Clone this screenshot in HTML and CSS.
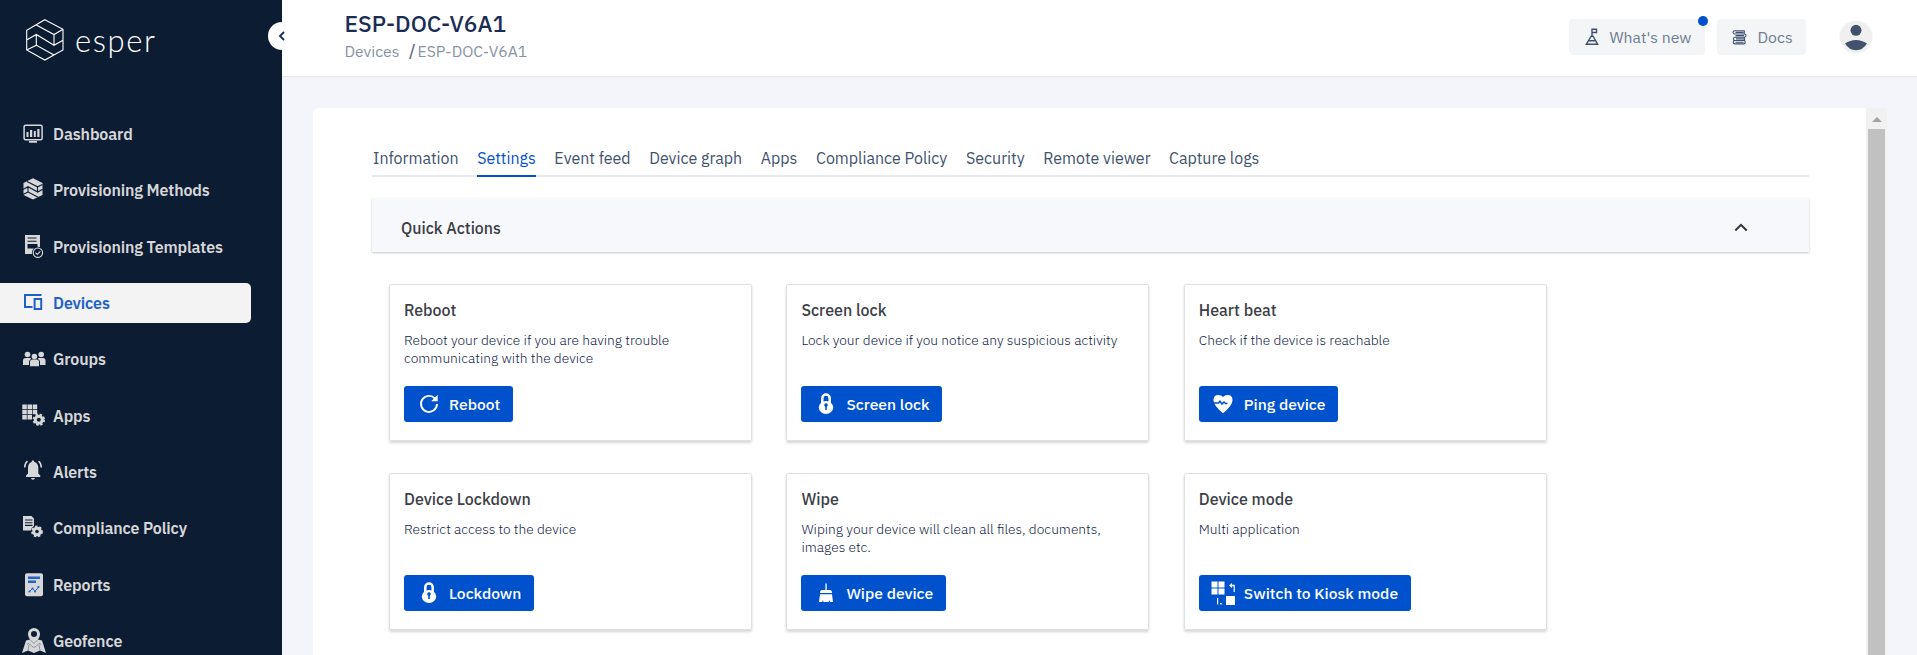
FILE: index.html
```html
<!DOCTYPE html>
<html lang="en">
<head>
<meta charset="utf-8">
<title>Esper</title>
<link rel="stylesheet" href="styles.css">
</head>
<body>
<div class="app">
  <aside class="sidebar">
    <div class="brand">
      <svg class="brand-mark" width="38" height="42" viewBox="0 0 38 42"><path d="M18.8 .7 37 10.3V31L18.8 41 .7 31V11.3ZM10.3 6 28 15.5l9-5.2M28 15.5v10.700l9-5M.7 21l9.600-5.500L28 26.200M10.300 15.500v10.700L28 36M10.300 26.200.7 31"/></svg>
      <span class="brand-name">esper</span>
    </div>
    <button class="collapse" aria-label="Collapse"><svg width="10" height="12" viewBox="0 0 10 12"><path d="M7 2 3 6l4 4"/></svg></button>
    <nav class="nav">
      <a class="nav-item"><svg viewBox="0 0 26 26"><rect x="2.100" y="4.300" width="18" height="14.500" rx="1.500" class="line"/><path d="M4.500 11h2v5h-2zM8 9h2.200v7H8zM11.800 10h2v6h-2zM15.300 8h2.200v8h-2.200zM7 20h8v1.800H7z"/></svg><span>Dashboard</span></a>
      <a class="nav-item"><svg viewBox="0 0 26 26"><path d="M11 1.200 20.500 6v12L11 22.500 1.500 18V6Z"/><path class="cut" d="M5 4.500 15.500 9.800 20.500 7.500M15.500 9.800v5M1 12.500l5-2.800L15.700 15l5-2.800M6 10v5l10.500 5.500M6 15l-5 2.500"/></svg><span>Provisioning Methods</span></a>
      <a class="nav-item"><svg viewBox="0 0 26 26"><path d="M3 1h15v12h-4l-4 7H3Z"/><path class="cut" d="M5.500 4h9M5.500 7.200h9"/><path class="hole" d="M5.500 10h10v3l-3 1.500h-7z"/><circle cx="15.900" cy="18.700" r="6" class="hole"/><circle cx="15.900" cy="18.700" r="4.700" class="line thin"/><path class="line thin" d="m13.500 18.700 1.800 1.700 3-3"/></svg><span>Provisioning Templates</span></a>
      <a class="nav-item active"><svg viewBox="0 0 26 26"><path class="line dev" d="M19.500 5H3v12M2 17.100h8.500M12.600 9h6.600v10h-6.600z"/></svg><span>Devices</span></a>
      <a class="nav-item"><svg viewBox="0 0 26 26"><circle cx="5.500" cy="8.500" r="2.800"/><circle cx="19.200" cy="8.500" r="2.800"/><path d="M1 19v-4.500q0-2.500 2.500-2.500h17.500q2.500 0 2.500 2.500V19Z"/><path class="hole" d="M7 21v-5q0-2 2-3a4 4 0 1 1 7 0q2 1 2 3v5z"/><circle cx="12.400" cy="10.500" r="2.800"/><path d="M8 20.200V16q0-2.500 2.500-2.500h4Q17 13.500 17 16v4.200Z"/></svg><span>Groups</span></a>
      <a class="nav-item"><svg viewBox="0 0 26 26"><path d="M.3 1.500h4.500v4.500H.3zM5.500 1.500h4.500v4.500H5.500zM10.700 1.500h4.500v4.500h-4.500zM.3 6.700h4.500v4.500H.3zM5.500 6.700h4.500v4.500H5.500zM10.700 6.700h4.500v4.500h-4.500zM.3 11.900h4.500v4.500H.3zM5.500 11.900h4.500v4.500H5.500z"/><circle cx="16.800" cy="16.700" r="6" class="hole"/><circle cx="16.800" cy="16.700" r="3.500" class="line gear"/><circle cx="16.800" cy="16.700" r="5.300" class="teeth"/></svg><span>Apps</span></a>
      <a class="nav-item"><svg viewBox="0 0 26 26"><path d="M11 1.500c1 0 1.300.7 1.300 1.500 3 .8 4 3 4 6v5.500l2 2V18H4v-1.500l2-2V9c0-3 1-5.200 3.700-6 0-.8.300-1.500 1.300-1.500ZM9 19h4q-.3 1.800-2 1.800T9 19Z"/><path class="line" d="M5.500 2.200Q2.700 4.300 2.700 8.500M16.500 2.200q2.800 2.100 2.800 6.300"/></svg><span>Alerts</span></a>
      <a class="nav-item"><svg viewBox="0 0 26 26"><path d="M1 .9h8.500l2.500 2.500v12H1Z"/><path class="cut" d="M3 5h7.500M3 7.700h7.500M3 10.400h7.500"/><circle cx="15" cy="16.500" r="6.300" class="hole"/><circle cx="15" cy="16.500" r="3.300" class="line gear"/><circle cx="15" cy="16.500" r="5" class="teeth"/></svg><span>Compliance Policy</span></a>
      <a class="nav-item"><svg viewBox="0 0 26 26"><rect x="3" y="1.300" width="18" height="23" rx="2"/><path class="blue bar" d="M6 5.800h12M6 9.800h8"/><path class="blue" d="m7.500 19.500 3-3 2.500 3 3.500-4.500"/><path class="blue dots" d="M7.500 19.500h.01M10.500 16.500h.01M13 19.500h.01M16.500 15h.01"/></svg><span>Reports</span></a>
      <a class="nav-item"><svg viewBox="0 0 26 26"><path d="M12 0a6 6 0 0 1 6 6c0 2-1 4-2 5.500l4 1L24 25l-6-2.500L12 25l-6-2.500L0 25l4-12.500 4-1C7 10 6 8 6 6a6 6 0 0 1 6-6Z"/><circle cx="12" cy="6" r="3" class="hole"/><path class="cut faint" d="M8 11.500q2 2 4 4 2-2 4-4M5 16.500l2-1 2.500 2.500 2.500 1.500 2.500-1.500 2.500-2.500 2 1M6 22l1-5M18 22l-1-5"/></svg><span>Geofence</span></a>
    </nav>
  </aside>

  <div class="page">
    <header class="topbar">
      <div class="heading">
        <h1 class="title">ESP-DOC-V6A1</h1>
        <div class="crumbs"><a class="crumb-root">Devices</a><span class="slash">/</span><span class="crumb-leaf">ESP-DOC-V6A1</span></div>
      </div>
      <div class="tools">
        <button class="tool whats-new"><svg width="14" height="18" viewBox="0 0 14 18"><path d="M1.300 16.300h11.400L8 8.200H6.200ZM4 12.700h6M7 8.200V1.200h4.500v3.300H7"/></svg><span>What's new</span><i class="dot"></i></button>
        <button class="tool docs"><svg width="15" height="15" viewBox="0 0 15 15"><path d="M12.800.8H3Q1 .8 1 2.400T3 4h9.800M12.300.8V4M3.500 2.400h8M3 4h9.500Q14 4 14 5.600T12.500 7.300H3.500M3.500 5.600H12M12.500 7.300H3Q1.500 7.300 1.500 8.900T3 10.500h9.500V7.300M4 8.900h8M3 10.500q-1.800 0-1.800 1.700T3 13.900h8.700q1.500 0 1.500-1.700t-1.500-1.700M3.500 12.200h8"/></svg><span>Docs</span></button>
        <svg class="avatar" width="34" height="34" viewBox="0 0 34 34"><circle cx="17" cy="17" r="16.500" fill="#f0f0f1"/><circle cx="17" cy="10.300" r="5.500"/><path d="M6 23.500Q11 20 17 20t11 3.500Q24 30.200 17 30.200T6 23.500Z"/></svg>
      </div>
    </header>

    <main class="panel">
      <div class="content">
        <div class="tabs">
          <a class="tab">Information</a><a class="tab selected">Settings</a><a class="tab">Event feed</a><a class="tab">Device graph</a><a class="tab">Apps</a><a class="tab">Compliance Policy</a><a class="tab">Security</a><a class="tab">Remote viewer</a><a class="tab">Capture logs</a>
        </div>
        <section class="accordion"><h2>Quick Actions</h2><svg width="14" height="9" viewBox="0 0 14 9"><path d="m1.300 7.500 5.700-5.700 5.700 5.700"/></svg></section>
        <div class="cards">
          <article class="card"><h3>Reboot</h3><p>Reboot your device if you are having trouble<br>communicating with the device</p>
            <button class="btn"><svg viewBox="0 0 24 24"><path class="stroke" d="M18 6.600A8 8 0 1 0 20 12"/><path d="M20.700 2.800v6.500h-6.500z"/></svg><span>Reboot</span></button></article>
          <article class="card"><h3>Screen lock</h3><p>Lock your device if you notice any suspicious activity</p>
            <button class="btn"><svg viewBox="0 0 24 24"><path class="stroke shackle" d="M8.300 11V6.200a3.700 3.700 0 0 1 7.400 0V11"/><ellipse cx="12" cy="15.500" rx="7.200" ry="6.500"/><path class="key" d="M10.200 13a1.800 1.800 0 1 1 2.600 1.700V18h-1.600v-3.300Q10.200 14 10.200 13Z"/></svg><span>Screen lock</span></button></article>
          <article class="card"><h3>Heart beat</h3><p>Check if the device is reachable</p>
            <button class="btn"><svg viewBox="0 0 24 24"><path d="M12 21.300Q2.500 13.500 2.500 8.300 2.500 3 7.300 3 10.500 3 12 5 13.500 3 16.700 3q4.800 0 4.800 5.300 0 5.200-9.500 13Z"/><path class="pulse" d="M3 11h4.500L9 9.300l2 2.700L13 10l1.500 1.500h2"/></svg><span>Ping device</span></button></article>
          <article class="card"><h3>Device Lockdown</h3><p>Restrict access to the device</p>
            <button class="btn"><svg viewBox="0 0 24 24"><path class="stroke shackle" d="M8.300 11V6.200a3.700 3.700 0 0 1 7.400 0V11"/><ellipse cx="12" cy="15.500" rx="7.200" ry="6.500"/><path class="key" d="M10.200 13a1.800 1.800 0 1 1 2.600 1.700V18h-1.600v-3.300Q10.200 14 10.200 13Z"/></svg><span>Lockdown</span></button></article>
          <article class="card"><h3>Wipe</h3><p>Wiping your device will clean all files, documents,<br>images etc.</p>
            <button class="btn"><svg viewBox="0 0 24 24"><path d="M11.400 2.500h1.300V9H16q2 0 2 3H6q0-3 2-3h3.400zM6 13.300h12L19 21h-3l-.7-2-.6 2H9.500L9 19l-.8 2H5z"/></svg><span>Wipe device</span></button></article>
          <article class="card"><h3>Device mode</h3><p>Multi application</p>
            <button class="btn"><svg viewBox="0 0 24 24"><path d="M.5.500h6v6h-6zM7.500.500h6v6h-6zM.5 7.500h6v6h-6zM7.500 7.500h6v6h-6zM15 15h9v9h-9zM18 4.500l3-2.500v1.800h2.800V11h-1.200V5.200H21V7zM6 17h1.200v6.500H6zM9 22h1.800v1.500H9z"/></svg><span>Switch to Kiosk mode</span></button></article>
        </div>
      </div>
      <div class="scrollbar"><i class="arrow"></i><i class="thumb"></i></div>
    </main>
  </div>
</div>
</body>
</html>
```
FILE: styles.css
```css
* { box-sizing: border-box; }
body { margin: 0; font-family: "IBM Plex Sans", Roboto, "Noto Sans", sans-serif; font-size: 16px; background: #f4f5fb; }
h1, h2, h3, p { margin: 0; }
button { font: inherit; border: 0; margin: 0; }
.app { display: flex; width: 1917px; height: 655px; overflow: hidden; }

.sidebar { position: relative; z-index: 1; flex: none; width: 282px; background: #0c1c32; }
.brand { display: flex; align-items: center; height: 82px; padding: 0 0 2px 26px; color: #fff; }
.brand-mark { fill: none; stroke: #fff; stroke-width: 1.1; }
.brand-name { margin: -1px 0 0 11px; font: 300 31px/40px Lato, sans-serif; letter-spacing: 1.6px; }
.collapse { position: absolute; left: 268px; top: 22px; width: 28px; height: 28px; padding: 0 0 0 9px; border-radius: 50%; background: #fff; display: flex; align-items: center; }
.collapse svg { fill: none; stroke: #1b2d59; stroke-width: 1.9; }
.nav { display: flex; flex-direction: column; gap: 16.33px; padding-top: 32px; }
.nav-item { display: flex; align-items: center; flex: none; width: 251px; height: 40px; padding-left: 22px; gap: 5px; font-weight: 600; letter-spacing: -.12px; color: #d6d7d9; border-radius: 0 5px 5px 0; }
.nav-item svg { width: 26px; height: 26px; fill: #d6d7d9; }
.nav-item .line { fill: none; stroke: #d6d7d9; stroke-width: 1.5; }
.nav-item .thin { stroke-width: 1.1; }
.nav-item .gear { stroke-width: 3; }
.nav-item .teeth { fill: none; stroke: #d6d7d9; stroke-width: 1.8; stroke-dasharray: 2.4 1.8; }
.nav-item .cut { fill: none; stroke: #0c1c32; stroke-width: 1.1; }
.nav-item .faint { stroke-width: .7; opacity: .5; }
.nav-item .hole { fill: #0c1c32; }
.nav-item .blue { fill: none; stroke: #2464c8; stroke-width: 1; }
.nav-item .bar { stroke-width: 2.4; }
.nav-item .dots { stroke-width: 2.2; stroke-linecap: round; }
.nav-item.active { background: #f3f3f3; color: #2161c6; }
.nav-item.active .dev { stroke: #2161c6; stroke-width: 2; }

.page { flex: 1; display: flex; flex-direction: column; min-width: 0; }
.topbar { display: flex; justify-content: space-between; flex: none; height: 77px; padding: 0 44.500px 0 61px; background: #fff; border-bottom: 1px solid #e6e7eb; }
.heading { padding: 8px 0 0 1.500px; }
.title { font-size: 22.800px; line-height: 31px; font-weight: 500; color: #1b2d55; }
.crumbs { display: flex; line-height: 24px; font-size: 15.750px; color: #8893a5; }
.slash { margin: 0 2px 0 9.500px; color: #5c6a80; font-weight: 500; }
.tools { display: flex; align-items: center; height: 74px; }
.tool { position: relative; display: flex; align-items: center; height: 36px; border-radius: 4px; background: #f4f5f7; font-size: 15.800px; color: #6f7c92; }
.tool svg { fill: none; stroke: #3f5070; stroke-width: 1.4; }
.whats-new { width: 136px; padding: 0 0 0 16px; gap: 11px; margin-right: 12px; }
.docs { width: 89px; padding: 0 0 0 15px; gap: 11px; margin-right: 33px; }
.tool.docs svg { stroke-width: 1.1; }
.dot { position: absolute; right: -3px; top: -3px; width: 10px; height: 10px; border-radius: 5px; background: #0052cc; }
.avatar { fill: #42526e; }

.panel { flex: 1; display: flex; margin: 31px 30px 0 31px; background: #fff; border-radius: 6px 0 0 0; overflow: hidden; }
.content { flex: 1; padding: 37px 57px 0 59px; }
.tabs { display: flex; gap: 18.600px; height: 32px; padding: 0 1px; border-bottom: 2px solid #e8e9ee; color: #42526e; line-height: 27px; }
.tab { flex: none; height: 32px; }
.tab.selected { color: #0052cc; border-bottom: 2px solid #0052cc; }
.accordion { display: flex; align-items: center; justify-content: space-between; height: 54px; margin: 21px 0 32px; padding: 5px 61px 0 29px; background: #f7f8fc; box-shadow: 0 1px 2px rgba(0,0,0,.22); }
.accordion h2 { font-size: 15.900px; font-weight: 500; color: #3a3d44; }
.accordion svg { fill: none; stroke: #333; stroke-width: 2; }
.cards { display: grid; grid-template-columns: repeat(3, 363px); gap: 32px 34.400px; padding-left: 17px; }
.card { height: 157px; padding: 14px 14px; border: 1px solid #dfe0e3; border-radius: 2px; box-shadow: 0 2px 3px rgba(0,0,0,.16); }
.card h3 { font-size: 16px; line-height: 22px; font-weight: 500; color: #3d4047; }
.card p { height: 65px; padding-top: 10px; font-size: 13.750px; line-height: 18px; font-weight: 300; color: #101a48; }
.btn { display: flex; align-items: center; height: 36px; padding: 0 12.500px; gap: 8.500px; border-radius: 3px; background: #0052cc; color: #fff; font-size: 15.650px; font-weight: 500; }
.btn svg { width: 24px; height: 24px; fill: #fff; }
.btn .stroke { fill: none; stroke: #fff; stroke-width: 1.900; }
.btn .shackle { stroke-width: 2.500; }
.btn .key { fill: #0052cc; }
.btn .pulse { fill: none; stroke: #0052cc; stroke-width: 1.500; }
.scrollbar { flex: none; display: flex; flex-direction: column; align-items: center; width: 21px; background: #f1f1f1; }
.arrow { flex: none; margin: 9px 0 7px; border: 5px solid transparent; border-top: 0; border-bottom-color: #a3a3a3; }
.thumb { flex: 1; width: 17px; background: #c1c1c1; }
```
